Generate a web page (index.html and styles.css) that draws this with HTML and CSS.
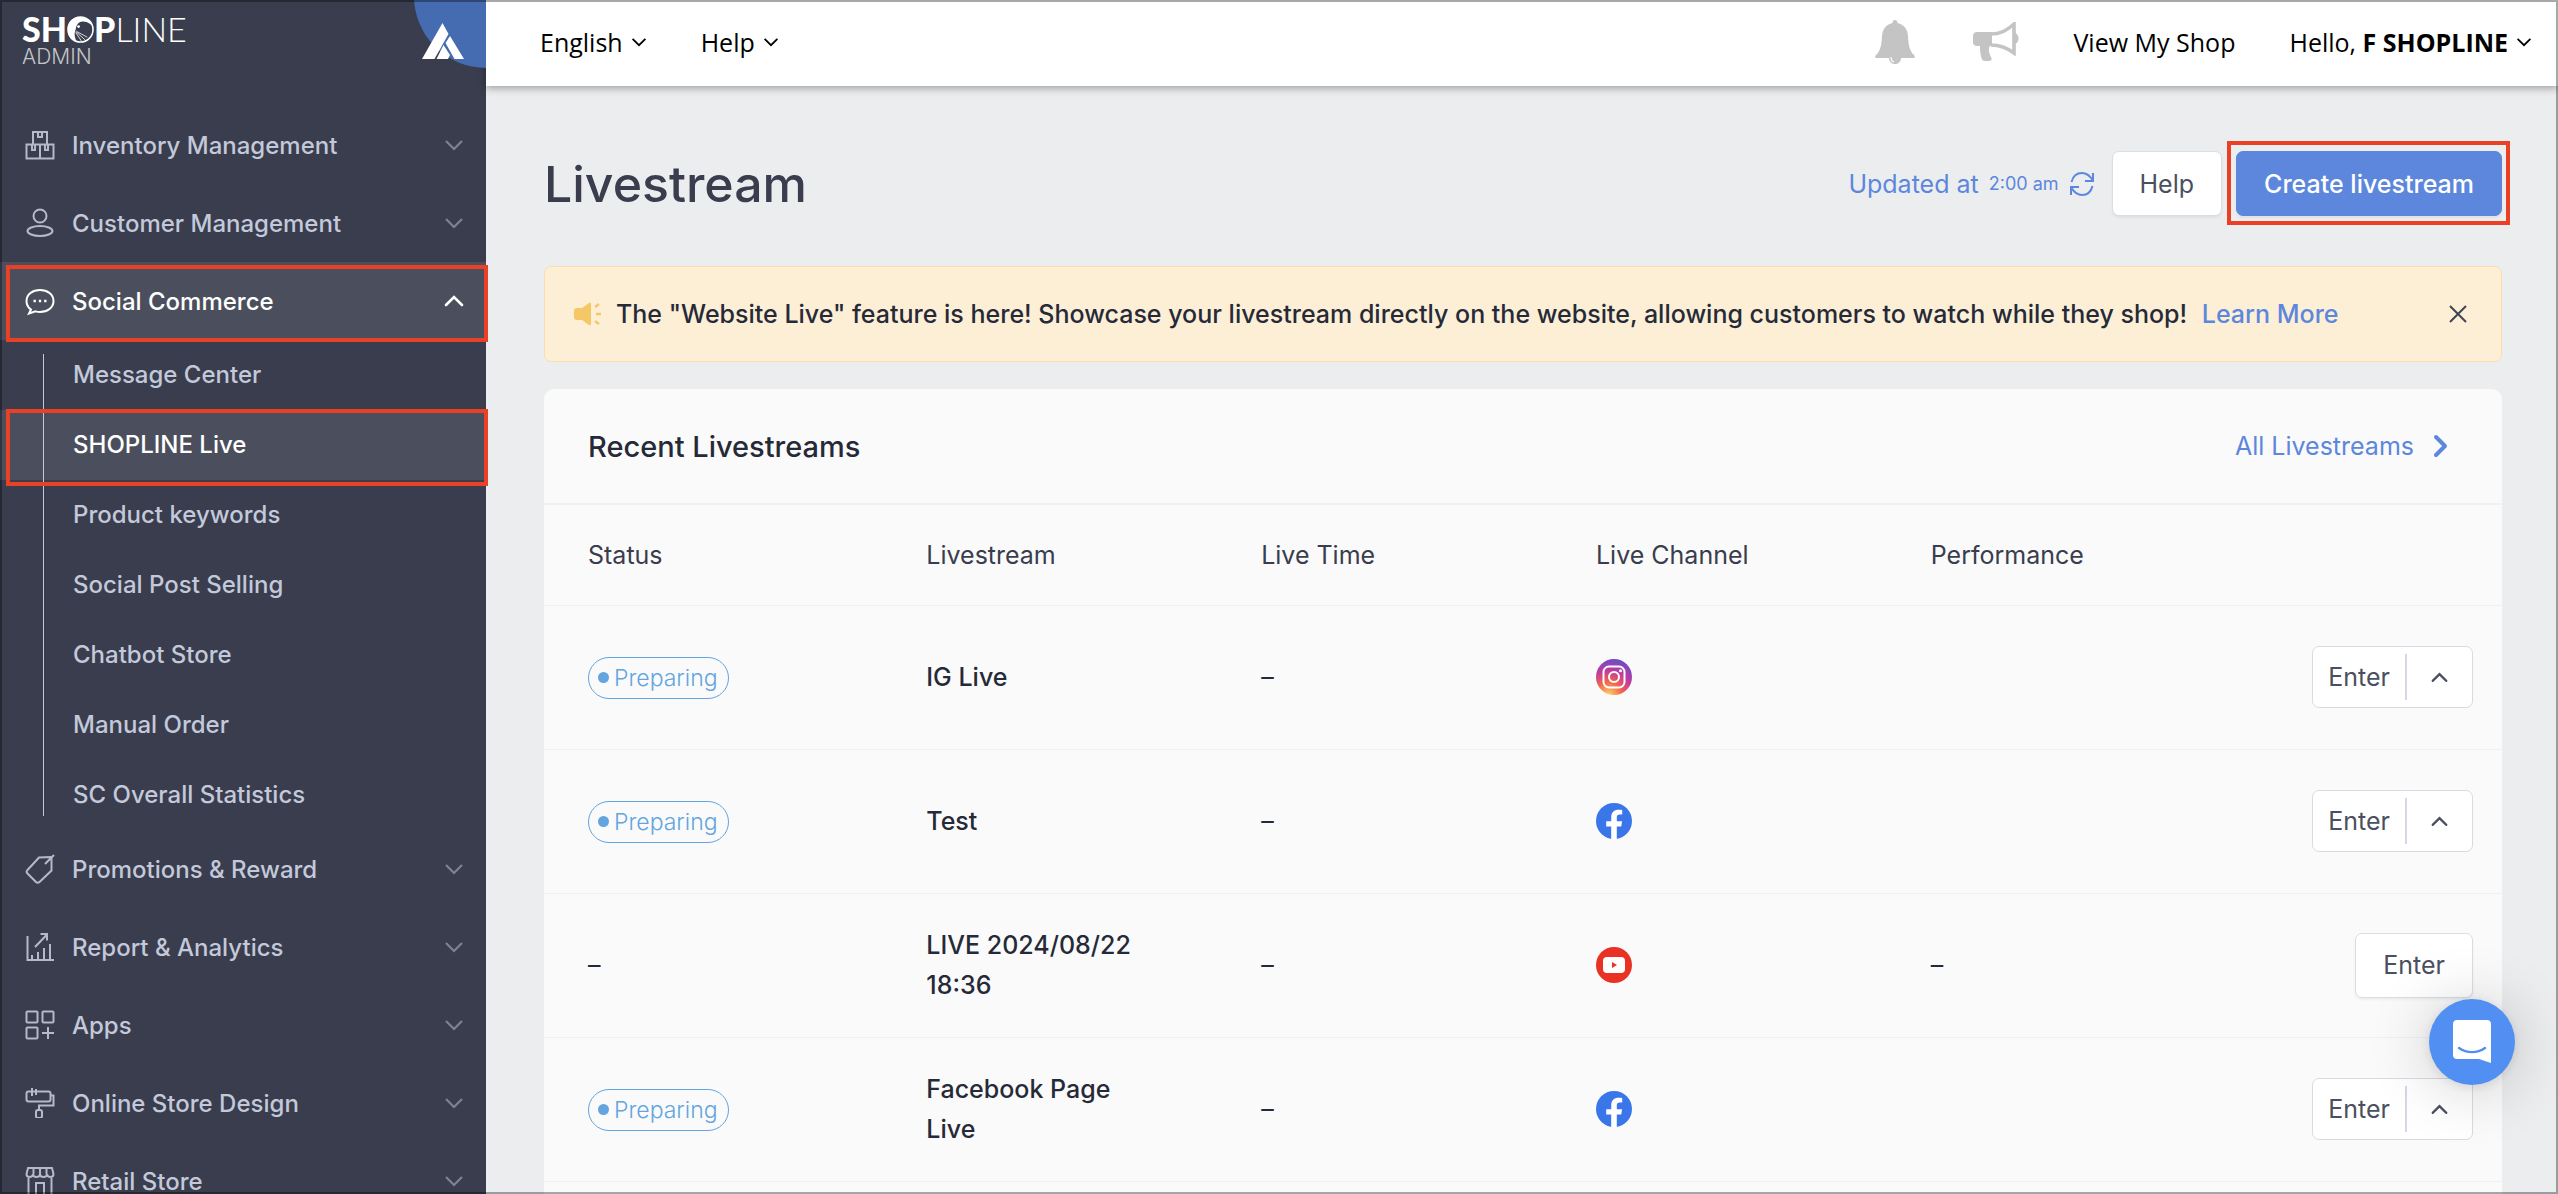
FILE: index.html
```html
<!DOCTYPE html>
<html lang="en">
<head>
    <meta charset="UTF-8">
    <meta name="viewport" content="width=device-width, initial-scale=1.0">
    <title>Livestream - SHOPLINE Admin</title>
    <link rel="stylesheet" href="styles.css">
</head>
<body>
    <!-- Shared icons -->
    <svg class="hidden" aria-hidden="true">
        <symbol id="chevron-down" viewBox="0 0 20 12"><path d="M2 2l8 8 8-8" fill="none" stroke="currentColor" stroke-width="2.2"/></symbol>
        <symbol id="chevron-up" viewBox="0 0 20 12"><path d="M2 10l8-8 8 8" fill="none" stroke="currentColor" stroke-width="2.6" stroke-linecap="round"/></symbol>
        <symbol id="facebook" viewBox="0 0 36 36">
            <circle cx="18" cy="18" r="18" fill="#3b75ea"/>
            <path d="M15.2 36V23.400h-5v-5.200h5v-3.800c0-5 2.900-7.600 7.300-7.600 1.400 0 2.600.1 3.700.3v4.500h-2.400c-2.300 0-3 1.300-3 2.900v3.700h5.300l-.9 5.200h-4.400V36z" fill="#fff"/>
        </symbol>
    </svg>

    <div class="app">
        <!-- Sidebar -->
        <aside class="sidebar">
            <div class="brand">
                <div class="logo">
                    <div class="logo-name">
                        <b>SH</b>
                        <svg class="logo-o" viewBox="0 0 28 28"><circle cx="14" cy="14" r="13" fill="none" stroke="#fff" stroke-width="1.600"/><path d="M14 1C6 1 1 7 1 14s4 12 9 13C8 22 7 18 9 14c1-6 4-9 9-8 3 0 6 2 8 4C24 4 20 1 14 1z" fill="#fff"/><circle cx="12" cy="11" r="1.500" fill="#fff"/><path d="M9 16l10 9M9 17l6 9M10 16l11 6" stroke="#fff" stroke-width=".8"/></svg>
                        <b>P</b><span>LINE</span>
                    </div>
                    <div class="logo-sub">ADMIN</div>
                </div>
                <svg class="badge" viewBox="0 0 72 68">
                    <circle cx="72" cy="-4" r="72" fill="#456bb0"/>
                </svg>
                <svg class="badge-mark" viewBox="0 0 42 36" fill="#fff">
                    <path d="M20.500 0l6 11L12.500 36H0z"/>
                    <path d="M28 13l14 23h-9.500L23.500 20z"/>
                    <path d="M21.500 22l6.500 10-2 4H14.500z"/>
                </svg>
            </div>

            <nav class="menu">
                <a class="menu-item" href="#">
                    <svg class="menu-icon" viewBox="0 0 30 30"><path d="M8 14V2h14v12M1.500 14.500h27v14h-27zM15 14.500v14M13 2v5h4V2M7 15v5h3v-5M20 15v5h3v-5"/></svg>
                    <span>Inventory Management</span>
                    <svg class="arrow"><use href="#chevron-down"/></svg>
                </a>
                <a class="menu-item" href="#">
                    <svg class="menu-icon" viewBox="0 0 30 30"><circle cx="15" cy="8" r="6.500"/><ellipse cx="15" cy="23" rx="12.500" ry="5"/></svg>
                    <span>Customer Management</span>
                    <svg class="arrow"><use href="#chevron-down"/></svg>
                </a>
                <a class="menu-item active marked" href="#">
                    <svg class="menu-icon" viewBox="0 0 30 30"><path d="M6 23.500C3 21.500 1.500 18.500 1.500 15 1.500 8.500 7.500 4 15 4s13.500 4.500 13.500 11S22.500 26 15 26c-2 0-3-.2-4.500-.6L4 27.500z"/><path d="M8.500 15h2.400M13.800 15h2.400M19.100 15h2.400" stroke-width="2.600"/></svg>
                    <span>Social Commerce</span>
                    <svg class="arrow"><use href="#chevron-up"/></svg>
                </a>
                <div class="submenu">
                    <a href="#">Message Center</a>
                    <a class="active marked" href="#">SHOPLINE Live</a>
                    <a href="#">Product keywords</a>
                    <a href="#">Social Post Selling</a>
                    <a href="#">Chatbot Store</a>
                    <a href="#">Manual Order</a>
                    <a href="#">SC Overall Statistics</a>
                </div>
                <a class="menu-item" href="#">
                    <svg class="menu-icon" viewBox="0 0 30 30"><path d="M14 3.500l11.500-.5 1 1v12.500L14.500 28c-1 1-2.500 1-3.500 0l-8.500-8.500c-1-1-1-2.500 0-3.500zM20 10l9-9"/></svg>
                    <span>Promotions &amp; Reward</span>
                    <svg class="arrow"><use href="#chevron-down"/></svg>
                </a>
                <a class="menu-item" href="#">
                    <svg class="menu-icon" viewBox="0 0 30 30"><path d="M2.500 4v24H29M7 28v-5M13 28v-8M19 28V16M25 28V12M10 15L22 2.500M15.500 2H22v6.500"/></svg>
                    <span>Report &amp; Analytics</span>
                    <svg class="arrow"><use href="#chevron-down"/></svg>
                </a>
                <a class="menu-item" href="#">
                    <svg class="menu-icon" viewBox="0 0 30 30"><rect x="1.500" y="1.500" width="11" height="11" rx="1"/><rect x="17.500" y="1.500" width="11" height="11" rx="1"/><rect x="1.500" y="17.500" width="11" height="11" rx="1"/><path d="M23 17v12M17 23h12"/></svg>
                    <span>Apps</span>
                    <svg class="arrow"><use href="#chevron-down"/></svg>
                </a>
                <a class="menu-item" href="#">
                    <svg class="menu-icon" viewBox="0 0 30 30"><rect x="1.500" y="3.500" width="24" height="10" rx="2"/><path d="M7 0v8M11 1v6M26 7.500h2.500v10H14V22"/><rect x="11" y="22" width="6" height="8" rx="2"/></svg>
                    <span>Online Store Design</span>
                    <svg class="arrow"><use href="#chevron-down"/></svg>
                </a>
                <a class="menu-item" href="#">
                    <svg class="menu-icon" viewBox="0 0 30 30"><path d="M3 2h24l1.500 6c0 4-6 4-6.500 0 0 4-7 4-7 0 0 4-7 4-7 0-.5 4-6.500 4-6.500 0zM8.500 2v6M15 2v6M21.500 2v6M3.500 12v17h23V12M11 29V17h8v12"/></svg>
                    <span>Retail Store</span>
                    <svg class="arrow"><use href="#chevron-down"/></svg>
                </a>
            </nav>
        </aside>

        <div class="content">
            <!-- Top bar -->
            <header class="topbar">
                <a href="#">English <svg class="caret"><use href="#chevron-down"/></svg></a>
                <a href="#">Help <svg class="caret"><use href="#chevron-down"/></svg></a>
                <div class="topbar-right">
                    <button class="icon-button" aria-label="Notifications">
                        <svg width="44" height="44" viewBox="0 0 44 44" fill="#c4c4c4"><path d="M20 0c1.500 0 2.500 1 2.500 3C29 4.500 32.500 9 33 16c.5 9 1.500 15 6 19 1.500 1.500 1 3-1 3H2c-2 0-2.500-1.500-1-3 4.500-4 5.500-10 6-19 .5-7 4-11.500 10.500-13C17.500 1 18.500 0 20 0z"/><path d="M14 38c0 8 12 8 12 0z"/><path d="M16 37c0 3 1 4.500 3 5" fill="none" stroke="#fff" stroke-width="1.200"/></svg>
                    </button>
                    <button class="icon-button" aria-label="Announcements">
                        <svg width="46" height="40" viewBox="0 0 46 40"><path d="M4 10h15v14H4c-2.500 0-4-1.500-4-4v-6c0-2.500 1.500-4 4-4z" fill="#c4c4c4"/><path d="M18 12c9 0 15-3 23-10v29c-8-6-14-8-23-8" fill="none" stroke="#c4c4c4" stroke-width="3.600"/><path d="M41 11c6 0 6 11 0 11zM7 23h10c-2 5-1 8 1 12 1 2 1 4-2 4h-4c-2 0-3-1-3.500-3-1.500-5-1.500-9-1.500-13z" fill="#c4c4c4"/></svg>
                    </button>
                    <a href="#">View My Shop</a>
                    <a href="#"><span>Hello, <b>F SHOPLINE</b></span> <svg class="caret"><use href="#chevron-down"/></svg></a>
                </div>
            </header>

            <main class="main">
                <div class="page-header">
                    <h1>Livestream</h1>
                    <div class="actions">
                        <div class="updated">
                            Updated at <small>2:00 am</small>
                            <svg width="26" height="26" viewBox="0 0 26 26" fill="none" stroke="currentColor" stroke-width="2"><path d="M2.500 11C4 5 8 2 13 2c5 0 8 3 10.500 7M24 2v8h-8M23.500 15C22 21 18 24 13 24c-5 0-8-3-10.500-7M2 24v-8h8"/></svg>
                        </div>
                        <button class="btn">Help</button>
                        <div class="marked primary-wrap">
                            <button class="btn btn-primary">Create livestream</button>
                        </div>
                    </div>
                </div>

                <!-- Announcement -->
                <div class="notice">
                    <svg class="notice-icon" width="28" height="24" viewBox="0 0 28 24"><path d="M3 6h5l7-5c1-.6 2-.2 2 1v20c0 1.200-1 1.600-2 1l-7-5H3c-2 0-3-1-3-3V9c0-2 1-3 3-3z" fill="#f6c766"/><path d="M21 5l4-3M22 12h5M21 19l4 3" stroke="#f6c766" stroke-width="2.400"/></svg>
                    <p>The "Website Live" feature is here! Showcase your livestream directly on the website, allowing customers to watch while they shop! <a href="#">Learn More</a></p>
                    <button class="icon-button" aria-label="Close">
                        <svg width="18" height="18" viewBox="0 0 18 18"><path d="M1 1l16 16M17 1L1 17" stroke="#3f4452" stroke-width="2"/></svg>
                    </button>
                </div>

                <!-- Recent livestreams -->
                <section class="card">
                    <div class="card-header">
                        <h2>Recent Livestreams</h2>
                        <a href="#">All Livestreams
                            <svg width="16" height="24" viewBox="0 0 16 24"><path d="M3 3l9 9-9 9" fill="none" stroke="currentColor" stroke-width="4" stroke-linecap="round" stroke-linejoin="round"/></svg>
                        </a>
                    </div>
                    <table>
                        <thead>
                            <tr>
                                <th class="col-status">Status</th>
                                <th>Livestream</th>
                                <th>Live Time</th>
                                <th>Live Channel</th>
                                <th>Performance</th>
                                <th class="col-actions"></th>
                            </tr>
                        </thead>
                        <tbody>
                            <tr>
                                <td><span class="pill">Preparing</span></td>
                                <td class="name">IG Live</td>
                                <td>–</td>
                                <td>
                                    <svg class="channel" viewBox="0 0 36 36">
                                        <defs>
                                            <radialGradient id="ig" cx=".35" cy="1" r="1.050">
                                                <stop offset="0" stop-color="#fdd36b"/>
                                                <stop offset=".35" stop-color="#f2654b"/>
                                                <stop offset=".65" stop-color="#c13aa0"/>
                                                <stop offset="1" stop-color="#5f4fd0"/>
                                            </radialGradient>
                                        </defs>
                                        <circle cx="18" cy="18" r="18" fill="url(#ig)"/>
                                        <g fill="none" stroke="#fff" stroke-width="2"><rect x="7.500" y="7.500" width="21" height="21" rx="5.500"/><circle cx="18" cy="18" r="5"/></g>
                                        <circle cx="24.500" cy="11.800" r="1.500" fill="#fff"/>
                                    </svg>
                                </td>
                                <td></td>
                                <td><div class="split"><button>Enter</button><button class="toggle" aria-label="More"><svg><use href="#chevron-up"/></svg></button></div></td>
                            </tr>
                            <tr>
                                <td><span class="pill">Preparing</span></td>
                                <td class="name">Test</td>
                                <td>–</td>
                                <td><svg class="channel"><use href="#facebook"/></svg></td>
                                <td></td>
                                <td><div class="split"><button>Enter</button><button class="toggle" aria-label="More"><svg><use href="#chevron-up"/></svg></button></div></td>
                            </tr>
                            <tr>
                                <td>–</td>
                                <td class="name">LIVE 2024/08/22 18:36</td>
                                <td>–</td>
                                <td>
                                    <svg class="channel" viewBox="0 0 36 36"><circle cx="18" cy="18" r="18" fill="#e93223"/><rect x="7" y="10" width="22" height="16" rx="4" fill="#fff"/><path d="M16 15l5 3-5 3z" fill="#e93223"/></svg>
                                </td>
                                <td>–</td>
                                <td><button class="btn">Enter</button></td>
                            </tr>
                            <tr>
                                <td><span class="pill">Preparing</span></td>
                                <td class="name">Facebook Page Live</td>
                                <td>–</td>
                                <td><svg class="channel"><use href="#facebook"/></svg></td>
                                <td></td>
                                <td><div class="split"><button>Enter</button><button class="toggle" aria-label="More"><svg><use href="#chevron-up"/></svg></button></div></td>
                            </tr>
                        </tbody>
                    </table>
                </section>
            </main>
        </div>
    </div>

    <!-- Chat launcher -->
    <button class="chat" aria-label="Open chat">
        <svg width="40" height="44" viewBox="0 0 40 44"><path d="M5 0h30c2.500 0 4 1.500 4 4v39l-12-4H5c-2.500 0-4-1.500-4-4V4c0-2.500 1.500-4 4-4z" fill="#fff"/><path d="M7 28c8 5.500 18 5.500 26 0" fill="none" stroke="#5190f2" stroke-width="2.400" stroke-linecap="round"/></svg>
    </button>
</body>
</html>
```
FILE: styles.css
```css
* {
    box-sizing: border-box;
}
body {
    margin: 0;
    font-family: Inter, "Liberation Sans", sans-serif;
    font-size: 25px;
    color: #262a38;
    background-color: #ecedef;
}
/* thin window frame */
body::after {
    content: "";
    position: fixed;
    inset: 0;
    border: 2px solid rgba(0, 0, 0, 0.34);
    pointer-events: none;
}
a {
    color: #5c87dd;
    text-decoration: none;
}
button {
    font: inherit;
    color: #4b5060;
    cursor: pointer;
}
.hidden {
    display: none;
}
.app {
    display: flex;
    height: 100vh;
    overflow: hidden;
}

/* Red highlight frame */
.marked {
    position: relative;
}
.marked::after {
    content: "";
    position: absolute;
    inset: 3px -2px -2px 6px;
    border: 4px solid #ea4025;
    z-index: 2;
}

/* Sidebar */
.sidebar {
    flex: none;
    width: 486px;
    font-size: 24px;
    font-weight: 500;
    background-color: #393d4d;
}
.brand {
    position: relative;
    height: 106px;
    padding: 12px 22px;
}
.logo-name {
    display: flex;
    align-items: center;
    font-family: Lato, sans-serif;
    font-size: 34px;
    line-height: 34px;
    color: #ffffff;
}
.logo-name b {
    font-weight: 900;
}
.logo-name span {
    font-weight: 300;
}
.logo-o {
    width: 27px;
    height: 27px;
}
.logo-sub {
    font-size: 21px;
    line-height: 22px;
    font-weight: 300;
    color: #c4c5c9;
}
.badge {
    position: absolute;
    top: 0;
    right: 0;
    width: 72px;
    height: 68px;
}
.badge-mark {
    position: absolute;
    top: 23px;
    right: 22px;
    width: 42px;
    height: 36px;
}
.menu-item {
    display: flex;
    align-items: center;
    gap: 17px;
    height: 78px;
    padding: 0 22px 0 25px;
    color: #c3c9da;
}
.menu-icon {
    width: 30px;
    height: 30px;
    fill: none;
    stroke: #b4bac9;
    stroke-width: 2;
}
.arrow {
    width: 20px;
    height: 12px;
    margin-left: auto;
    color: #7d8394;
}
.menu-item.active, .submenu .active {
    color: #ffffff;
    background-color: #4b4f5d;
}
.active .menu-icon {
    stroke: #ffffff;
}
.active .arrow {
    color: #ffffff;
}
.submenu {
    position: relative;
}
.submenu::before {
    content: "";
    position: absolute;
    top: 14px;
    bottom: 14px;
    left: 43px;
    width: 1px;
    background-color: #c3c9da;
    z-index: 1;
}
.submenu a {
    display: block;
    padding-left: 73px;
    line-height: 70px;
    color: #c3c9da;
}
.submenu .marked::after {
    inset: -1px -2px -6px 6px;
}

/* Top bar */
.content {
    flex: 1;
    min-width: 0;
    display: flex;
    flex-direction: column;
}
.topbar {
    flex: none;
    display: flex;
    align-items: center;
    gap: 54px;
    height: 86px;
    padding: 0 26px 2px 54px;
    font-family: "Open Sans", sans-serif;
    background-color: #ffffff;
    box-shadow: 0 2px 8px rgba(0, 0, 0, 0.35);
}
.topbar a {
    display: flex;
    align-items: center;
    gap: 8px;
    color: #000000;
}
.caret {
    width: 16px;
    height: 10px;
}
.topbar-right {
    display: flex;
    align-items: center;
    gap: 54px;
    margin-left: auto;
}
.icon-button {
    display: flex;
    padding: 0;
    border: none;
    background: none;
}

/* Page */
.main {
    flex: 1;
    min-height: 0;
    display: flex;
    flex-direction: column;
    padding: 65px 56px 0 58px;
}
.page-header {
    display: flex;
    align-items: center;
    justify-content: space-between;
    height: 65px;
    margin-bottom: 50px;
}
h1 {
    margin: 0;
    font-size: 50px;
    font-weight: 500;
    color: #393d4d;
}
.actions {
    display: flex;
    align-items: center;
    gap: 14px;
}
.updated {
    display: flex;
    align-items: center;
    gap: 10px;
    margin-right: 3px;
    color: #5c87dd;
}
.updated small {
    font-size: 18px;
}
.btn {
    height: 65px;
    padding: 0 27px;
    border: 1px solid #d8dee6;
    border-radius: 7px;
    background-color: #ffffff;
    box-shadow: 0 2px 3px rgba(0, 0, 0, 0.05);
}
.btn-primary {
    font-weight: 500;
    color: #ffffff;
    border-color: #5c87dd;
    background-color: #5c87dd;
}
.primary-wrap::after {
    inset: -10px -8px -9px -9px;
}
.notice {
    display: flex;
    align-items: center;
    height: 96px;
    padding: 0 34px 0 29px;
    margin-bottom: 27px;
    border: 1px solid #f9deb0;
    border-radius: 7px;
    background-color: #fcefd6;
}
.notice-icon {
    margin-right: 14px;
}
.notice p {
    flex: 1;
    margin: 0;
    font-weight: 500;
}
.notice a {
    margin-left: 8px;
}

/* Livestream table */
.card {
    flex: 1;
    border-radius: 10px 10px 0 0;
    background-color: #fafafa;
}
.card-header {
    display: flex;
    align-items: center;
    justify-content: space-between;
    height: 116px;
    padding: 0 53px 0 44px;
    border-bottom: 2px solid #eff1f5;
}
.card-header h2 {
    margin: 0;
    font-size: 29px;
    font-weight: 500;
}
.card-header a {
    display: flex;
    align-items: center;
    gap: 19px;
}
table {
    width: 100%;
    table-layout: fixed;
    border-collapse: collapse;
}
th, td {
    padding: 0 24px;
    text-align: left;
    border-bottom: 1px solid #eff0f2;
}
th {
    width: 17.1%;
    height: 100px;
    font-weight: 400;
    color: #393d4d;
}
.col-status {
    width: 18.3%;
}
.col-actions {
    width: auto;
}
td {
    height: 144px;
    line-height: 40px;
}
th:first-child, td:first-child {
    padding-left: 44px;
}
td:last-child {
    padding-right: 29px;
    text-align: right;
}
td.name {
    padding-right: 80px;
    font-weight: 500;
}
.channel {
    display: block;
    width: 36px;
    height: 36px;
}
.pill {
    display: inline-flex;
    align-items: center;
    gap: 5px;
    height: 42px;
    padding: 0 10px 0 9px;
    border: 1px solid #62a5df;
    border-radius: 21px;
    font-size: 23px;
    font-weight: 300;
    vertical-align: middle;
    color: #62a5df;
}
.pill::before {
    content: "";
    width: 11px;
    height: 11px;
    border-radius: 50%;
    background-color: #62a5df;
}
.split {
    display: inline-flex;
    align-items: center;
    height: 62px;
    border: 1px solid #d8dae6;
    border-radius: 7px;
    vertical-align: middle;
    background-color: #ffffff;
}
.split button {
    height: 46px;
    padding: 0 15px;
    border: none;
    background: none;
}
.split .toggle {
    display: flex;
    align-items: center;
    justify-content: center;
    width: 67px;
    padding: 0;
    border-left: 2px solid #d5d9e6;
}
.toggle svg {
    width: 17px;
    height: 11px;
}

/* Chat launcher */
.chat {
    position: fixed;
    right: 43px;
    bottom: 109px;
    display: flex;
    align-items: center;
    justify-content: center;
    width: 86px;
    height: 86px;
    padding: 0;
    border: none;
    border-radius: 50%;
    background-color: #5190f2;
    box-shadow: 0 2px 12px rgba(0, 0, 0, 0.1), 0 4px 64px rgba(0, 0, 0, 0.2);
}
```
